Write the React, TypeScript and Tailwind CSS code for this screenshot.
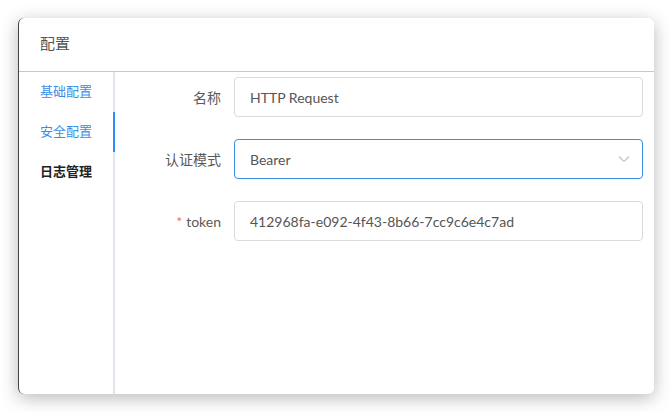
const font = { fontFamily: 'Lato, "Noto Sans CJK SC", sans-serif' };

const Field = ({ label, required, children }: { label: string; required?: boolean; children: React.ReactNode }) => (
  <div className="flex items-center h-10">
    <div className="w-[106px] text-right text-[14px] text-[#5a5a5a]">
      {required && <span className="text-[#f56c6c] mr-1">*</span>}
      {label}
    </div>
    <div className="ml-[13px] mr-[11px] flex-1 h-10">{children}</div>
  </div>
);

const App = () => {
  return (
    <div className="w-[672px] h-[412px] bg-white p-[18px]" style={font}>
      <div className="h-[376px] flex flex-col bg-white rounded-[6px] border-l border-l-[#444] shadow-[0_4px_18px_rgba(0,0,0,0.28)] overflow-hidden">
        <div className="h-[54px] shrink-0 flex items-center px-[21px] pb-[2px] text-[15px] text-[#555] border-b border-[#c6c6c6]">
          配置
        </div>
        <div className="flex flex-1">
          <div className="w-[96px] shrink-0 border-r-2 border-[#dfe3ec] relative">
            <div className="h-10 flex items-center pl-[21px] text-[13px] text-[#3a8ee6]">基础配置</div>
            <div className="h-10 flex items-center pl-[21px] text-[13px] text-[#3a8ee6] relative">
              安全配置
              <span className="absolute right-[-2px] top-0 w-[2px] h-10 bg-[#2d8cf0]" />
            </div>
            <div className="h-10 flex items-center pl-[21px] text-[13px] font-semibold text-[#222]">日志管理</div>
          </div>
          <div className="flex-1 pt-[5px] flex flex-col gap-[22px]">
            <Field label="名称">
              <div className="h-10 flex items-center px-[15px] border border-[#d9dae0] rounded-[4px] text-[14px] text-[#555]">
                HTTP Request
              </div>
            </Field>
            <Field label="认证模式">
              <div className="h-10 flex items-center justify-between px-[15px] border border-[#3a8ee6] rounded-[4px] text-[14px] text-[#555]">
                Bearer
                <svg width="12" height="8" viewBox="0 0 12 8" className="mr-[-3px]">
                  <path d="M1 1.5 L6 6.5 L11 1.5" fill="none" stroke="#c0c4cc" strokeWidth="1.2" />
                </svg>
              </div>
            </Field>
            <Field label="token" required>
              <div className="h-10 flex items-center px-[15px] border border-[#d9dae0] rounded-[4px] text-[14px] text-[#555]">
                412968fa-e092-4f43-8b66-7cc9c6e4c7ad
              </div>
            </Field>
          </div>
        </div>
      </div>
    </div>
  );
};

export default App;
